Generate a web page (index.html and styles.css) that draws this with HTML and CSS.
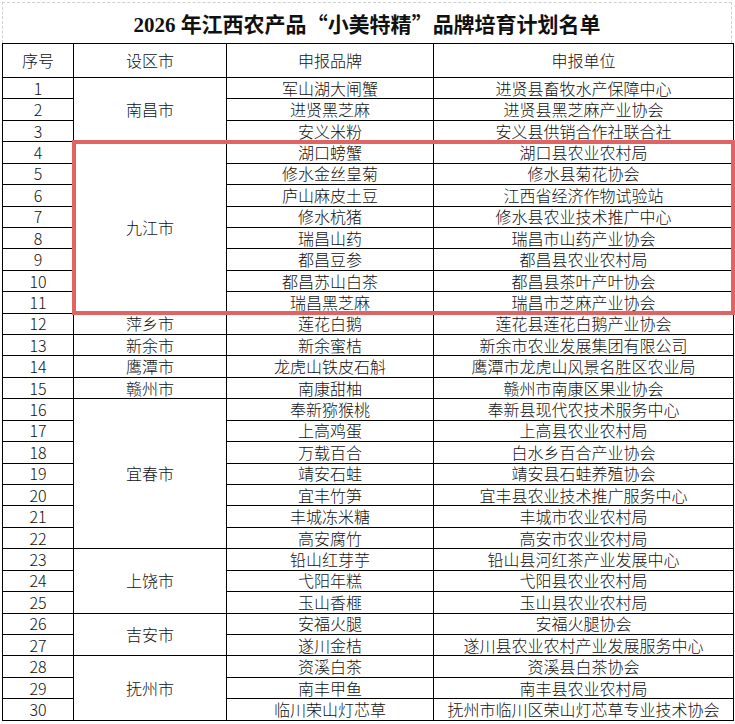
FILE: index.html
```html
<!DOCTYPE html>
<html lang="zh-CN">
<head>
<meta charset="utf-8">
<title>2026年江西农产品“小美特精”品牌培育计划名单</title>
<link rel="stylesheet" href="styles.css">
</head>
<body>
<div class="sheet">
  <div class="title-band">
    <h1 class="title">2026 年江西农产品<span class="q">“</span>小美特精<span class="q">”</span>品牌培育计划名单</h1>
  </div>
  <table class="list">
    <colgroup>
      <col class="c-no">
      <col class="c-city">
      <col class="c-brand">
      <col class="c-unit">
    </colgroup>
    <thead>
      <tr class="head"><th>序号</th><th>设区市</th><th>申报品牌</th><th>申报单位</th></tr>
    </thead>
    <tbody>
      <tr><td>1</td><td rowspan="3">南昌市</td><td>军山湖大闸蟹</td><td>进贤县畜牧水产保障中心</td></tr>
      <tr><td>2</td><td>进贤黑芝麻</td><td>进贤县黑芝麻产业协会</td></tr>
      <tr><td>3</td><td>安义米粉</td><td>安义县供销合作社联合社</td></tr>
      <tr><td>4</td><td rowspan="8">九江市</td><td>湖口螃蟹</td><td>湖口县农业农村局</td></tr>
      <tr><td>5</td><td>修水金丝皇菊</td><td>修水县菊花协会</td></tr>
      <tr><td>6</td><td>庐山麻皮土豆</td><td>江西省经济作物试验站</td></tr>
      <tr><td>7</td><td>修水杭猪</td><td>修水县农业技术推广中心</td></tr>
      <tr><td>8</td><td>瑞昌山药</td><td>瑞昌市山药产业协会</td></tr>
      <tr><td>9</td><td>都昌豆参</td><td>都昌县农业农村局</td></tr>
      <tr><td>10</td><td>都昌苏山白茶</td><td>都昌县茶叶产叶协会</td></tr>
      <tr><td>11</td><td>瑞昌黑芝麻</td><td>瑞昌市芝麻产业协会</td></tr>
      <tr><td>12</td><td>萍乡市</td><td>莲花白鹅</td><td>莲花县莲花白鹅产业协会</td></tr>
      <tr><td>13</td><td>新余市</td><td>新余蜜桔</td><td>新余市农业发展集团有限公司</td></tr>
      <tr><td>14</td><td>鹰潭市</td><td>龙虎山铁皮石斛</td><td>鹰潭市龙虎山风景名胜区农业局</td></tr>
      <tr><td>15</td><td>赣州市</td><td>南康甜柚</td><td>赣州市南康区果业协会</td></tr>
      <tr><td>16</td><td rowspan="7">宜春市</td><td>奉新猕猴桃</td><td>奉新县现代农技术服务中心</td></tr>
      <tr><td>17</td><td>上高鸡蛋</td><td>上高县农业农村局</td></tr>
      <tr><td>18</td><td>万载百合</td><td>白水乡百合产业协会</td></tr>
      <tr><td>19</td><td>靖安石蛙</td><td>靖安县石蛙养殖协会</td></tr>
      <tr><td>20</td><td>宜丰竹笋</td><td>宜丰县农业技术推广服务中心</td></tr>
      <tr><td>21</td><td>丰城冻米糖</td><td>丰城市农业农村局</td></tr>
      <tr><td>22</td><td>高安腐竹</td><td>高安市农业农村局</td></tr>
      <tr><td>23</td><td rowspan="3">上饶市</td><td>铅山红芽芋</td><td>铅山县河红茶产业发展中心</td></tr>
      <tr><td>24</td><td>弋阳年糕</td><td>弋阳县农业农村局</td></tr>
      <tr><td>25</td><td>玉山香榧</td><td>玉山县农业农村局</td></tr>
      <tr><td>26</td><td rowspan="2">吉安市</td><td>安福火腿</td><td>安福火腿协会</td></tr>
      <tr><td>27</td><td>遂川金桔</td><td>遂川县农业农村产业发展服务中心</td></tr>
      <tr><td>28</td><td rowspan="3">抚州市</td><td>资溪白茶</td><td>资溪县白茶协会</td></tr>
      <tr><td>29</td><td>南丰甲鱼</td><td>南丰县农业农村局</td></tr>
      <tr><td>30</td><td>临川荣山灯芯草</td><td>抚州市临川区荣山灯芯草专业技术协会</td></tr>
    </tbody>
  </table>
  <div class="highlight"></div>
</div>
</body>
</html>
```
FILE: styles.css
```css
html, body {
  margin: 0;
  padding: 0;
  background: #ffffff;
}

.sheet {
  position: relative;
  width: 735px;
  height: 724px;
  overflow: hidden;
  font-family: "Noto Sans CJK SC", sans-serif;
  color: #111111;
}

.title-band {
  box-sizing: border-box;
  margin: 2px 3px 0 2px;
  height: 41px;
  padding-top: 1px;
  border-top: 1px dashed #cfcfcf;
  border-left: 1px dashed #cfcfcf;
  border-right: 1px dashed #cfcfcf;
  display: flex;
  align-items: center;
  justify-content: center;
}

.title {
  margin: 0;
  font-family: "Liberation Serif", "Noto Sans CJK SC", serif;
  font-size: 21px;
  font-weight: bold;
  line-height: 24px;
  color: #111111;
}

.title .q {
  font-family: "Noto Sans CJK SC", sans-serif;
}

.list {
  margin-left: 2px;
  border-collapse: collapse;
  table-layout: fixed;
  width: 731px;
}

.c-no { width: 71px; }
.c-city { width: 153px; }
.c-brand { width: 207px; }
.c-unit { width: 300px; }

.list th,
.list td {
  border: 1px solid #000000;
  padding: 0;
  text-align: center;
  vertical-align: middle;
  font-size: 16px;
  font-weight: 300;
  line-height: 19px;
  white-space: nowrap;
}

.list thead th {
  height: 33px;
}

.list tbody td {
  height: 20.43px;
}

.highlight {
  position: absolute;
  left: 72px;
  top: 140px;
  width: 655px;
  height: 167px;
  border: 4px solid #e06464;
}
```
